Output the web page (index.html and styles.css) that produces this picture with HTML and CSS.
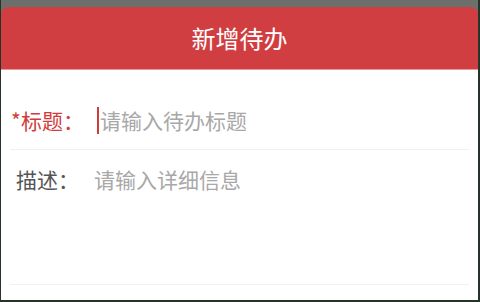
FILE: index.html
```html
<!DOCTYPE html>
<html lang="zh-CN">
<head>
  <meta charset="UTF-8">
  <meta name="viewport" content="width=device-width, initial-scale=1.0">
  <title>新增待办</title>
  <link rel="stylesheet" href="styles.css">
</head>
<body>
  <div class="screen">
    <div class="top">
      <div class="header">新增待办</div>
    </div>

    <form class="form">
      <div class="row row-title">
        <label class="label required" for="title">*标题：</label>
        <div class="field">
          <span class="caret"></span>
          <span class="placeholder">请输入待办标题</span>
        </div>
      </div>

      <div class="row row-desc">
        <label class="label" for="desc">描述：</label>
        <div class="field">
          <span class="placeholder">请输入详细信息</span>
        </div>
      </div>
    </form>
  </div>
</body>
</html>
```

FILE: styles.css
```css
* {
  margin: 0;
  padding: 0;
  box-sizing: border-box;
}

html, body {
  height: 100%;
}

body {
  background: #26332b; /* dark window frame */
  font-family: "Noto Sans CJK SC", "Noto Sans", sans-serif;
  overflow: hidden;
}

.screen {
  height: 300px;
  margin: 0 2px 0 1px;
  background: #fff;
}

.top {
  background: #6d6f6d;
  padding-top: 7px;
}

.header {
  height: 63px;
  background: #d03e41;
  border-radius: 7px 7px 0 0;
  border-bottom: 1px solid #eb9a9b;
  color: #fff;
  font-size: 24px;
  line-height: 62px;
  text-align: center;
}

.form {
  padding: 0 9px;
}

.row {
  display: flex;
  align-items: flex-start;
  font-size: 21px;
  line-height: 28px;
  border-bottom: 1px solid #f0f0f0;
}

.row-title {
  padding-top: 36px;
  height: 80px;
}

.row-desc {
  padding-top: 15px;
  height: 135px;
}

.label {
  width: 75px;
  text-align: center;
  color: #555;
}

.label.required {
  color: #d03c3c;
}

.field {
  display: flex;
  align-items: center;
  margin-left: 9px;
  height: 28px;
}

.caret {
  width: 2px;
  height: 27px;
  background: #d03c3c;
  margin-right: 1px;
}

.row-title .field {
  margin-left: 12px;
}

.placeholder {
  color: #a8a8a8;
}
```
